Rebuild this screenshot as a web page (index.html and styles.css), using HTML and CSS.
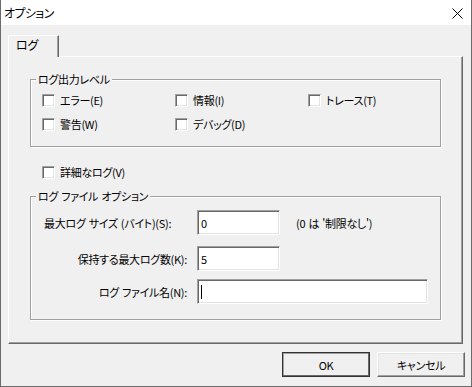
FILE: index.html
```html
<!DOCTYPE html>
<html lang="ja">
<head>
    <meta charset="UTF-8">
    <title>オプション</title>
    <link rel="stylesheet" href="styles.css">
</head>
<body>
    <div class="window">
        <div class="titlebar">
            <span class="title">オプション</span>
            <svg class="close" width="11" height="11" viewBox="0 0 11 11">
                <path d="M0.5 0.5 L10.5 10.5 M10.5 0.5 L0.5 10.5" stroke="#000" stroke-width="1" fill="none"/>
            </svg>
        </div>

        <div class="content">
            <div class="tabs">
                <div class="tab">ログ</div>
            </div>

            <div class="panel">
                <div class="group group-level">
                    <div class="group-title">ログ出力レベル</div>
                    <div class="check-grid">
                        <label class="check"><span class="box"></span>エラー(E)</label>
                        <label class="check"><span class="box"></span>情報(I)</label>
                        <label class="check"><span class="box"></span>トレース(T)</label>
                        <label class="check"><span class="box"></span>警告(W)</label>
                        <label class="check"><span class="box"></span>デバッグ(D)</label>
                    </div>
                </div>

                <label class="check check-verbose"><span class="box"></span>詳細なログ(V)</label>

                <div class="group group-file">
                    <div class="group-title">ログ ファイル オプション</div>
                    <div class="field field-size">
                        <span class="field-label label-left">最大ログ サイズ (バイト)(S):</span>
                        <div class="textbox">0</div>
                        <span class="hint">(0 は '制限なし')</span>
                    </div>
                    <div class="field field-count">
                        <span class="field-label">保持する最大ログ数(K):</span>
                        <div class="textbox">5</div>
                    </div>
                    <div class="field field-name">
                        <span class="field-label">ログ ファイル名(N):</span>
                        <div class="textbox textbox-wide"><span class="caret"></span></div>
                    </div>
                </div>
            </div>

            <div class="buttons">
                <button class="btn btn-default">OK</button>
                <button class="btn">キャンセル</button>
            </div>
        </div>
    </div>
</body>
</html>
```

FILE: styles.css
```css
* {
    margin: 0;
    padding: 0;
    box-sizing: border-box;
}

body {
    width: 472px;
    height: 387px;
    overflow: hidden;
    background: #f0f0f0;
    font-family: "Noto Sans CJK JP", "Noto Sans", sans-serif;
    font-size: 11px;
    letter-spacing: -0.3px;
    word-spacing: 1px;
    font-feature-settings: "palt";
    color: #000;
}

.window {
    width: 472px;
    height: 387px;
    border: 1px solid #6b6b6b;
    border-top: none;
    background: #f0f0f0;
}

/* title bar */
.titlebar {
    height: 25px;
    background: #fff;
    display: flex;
    align-items: center;
    justify-content: space-between;
    padding: 0 8px 0 3px;
}

.title {
    line-height: 14px;
    font-size: 12px;
    letter-spacing: -0.6px;
}

.close {
    display: block;
    margin-top: 2px;
}

.content {
    padding: 10px 8px 0 7px;
}

/* tab strip */
.tabs {
    display: flex;
    height: 21px;
}

.tab {
    position: relative;
    z-index: 1;
    width: 51px;
    height: 22px;
    background: #f0f0f0;
    border-top: 1px solid #fff;
    border-left: 1px solid #fff;
    border-right: 1px solid #696969;
    box-shadow: inset -1px 0 #a0a0a0;
    padding: 2px 0 0 7px;
    line-height: 14px;
    font-size: 12px;
}

.panel {
    height: 288px;
    border: 1px solid #fff;
    border-right-color: #696969;
    border-bottom-color: #696969;
    box-shadow: inset -1px -1px #a0a0a0;
    padding-left: 21px;
    padding-top: 22px;
}

/* group boxes */
.group {
    width: 411px;
    border: 1px solid #a0a0a0;
    box-shadow: inset 1px 1px #fff, 1px 1px #fff;
}

.group-title {
    width: fit-content;
    margin: -8px 0 0 5px;
    padding: 0 2px;
    line-height: 14px;
    height: 14px;
    background: #f0f0f0;
}

.group-level {
    padding-bottom: 10px;
}

.check-grid {
    display: grid;
    grid-template-columns: 133px 133px auto;
    grid-auto-rows: 24px;
    margin-top: 2px;
    padding-left: 11px;
}

.check {
    display: flex;
    align-items: center;
    gap: 5px;
    height: 24px;
    line-height: 14px;
}

.box {
    width: 13px;
    height: 13px;
    flex: none;
    background: #fff;
    border: 1px solid;
    border-color: #a0a0a0 #fff #fff #a0a0a0;
    box-shadow: inset 1px 1px #696969, inset -1px -1px #e3e3e3;
}

.check-verbose {
    margin: 13px 0 0 12px;
}

.group-file {
    margin-top: 12px;
    padding-bottom: 15px;
}

/* text fields */
.field {
    display: flex;
    align-items: center;
    height: 25px;
}

.field-size {
    margin-top: 7px;
}

.field-count {
    margin-top: 11px;
}

.field-name {
    margin-top: 8px;
}

.field-label {
    width: 166px;
    flex: none;
    text-align: right;
    padding-right: 10px;
    white-space: nowrap;
    line-height: 14px;
}

.field-label.label-left {
    text-align: left;
    padding-left: 13px;
    padding-right: 0;
}

.textbox {
    width: 83px;
    height: 25px;
    background: #fff;
    border: 1px solid;
    border-color: #a0a0a0 #fff #fff #a0a0a0;
    box-shadow: inset 1px 1px #696969, inset -1px -1px #e3e3e3;
    padding: 0 0 0 3px;
    display: flex;
    align-items: center;
    line-height: 14px;
}

.textbox-wide {
    width: 231px;
}

.caret {
    width: 1px;
    height: 14px;
    background: #000;
}

.hint {
    margin-left: 16px;
    line-height: 14px;
}

/* dialog buttons */
.buttons {
    display: flex;
    justify-content: flex-end;
    gap: 7px;
    margin: 8px -2px 0 0;
}

.btn {
    width: 88px;
    height: 25px;
    font: inherit;
    letter-spacing: inherit;
    color: #000;
    background: #f0f0f0;
    border: 1px solid;
    border-color: #fff #696969 #696969 #fff;
    box-shadow: inset -1px -1px #a0a0a0, inset 1px 1px #e3e3e3;
    line-height: 14px;
}

.btn-default {
    border-color: #333;
    box-shadow: inset -1px -1px #696969, inset 1px 1px #a0a0a0;
}
```
